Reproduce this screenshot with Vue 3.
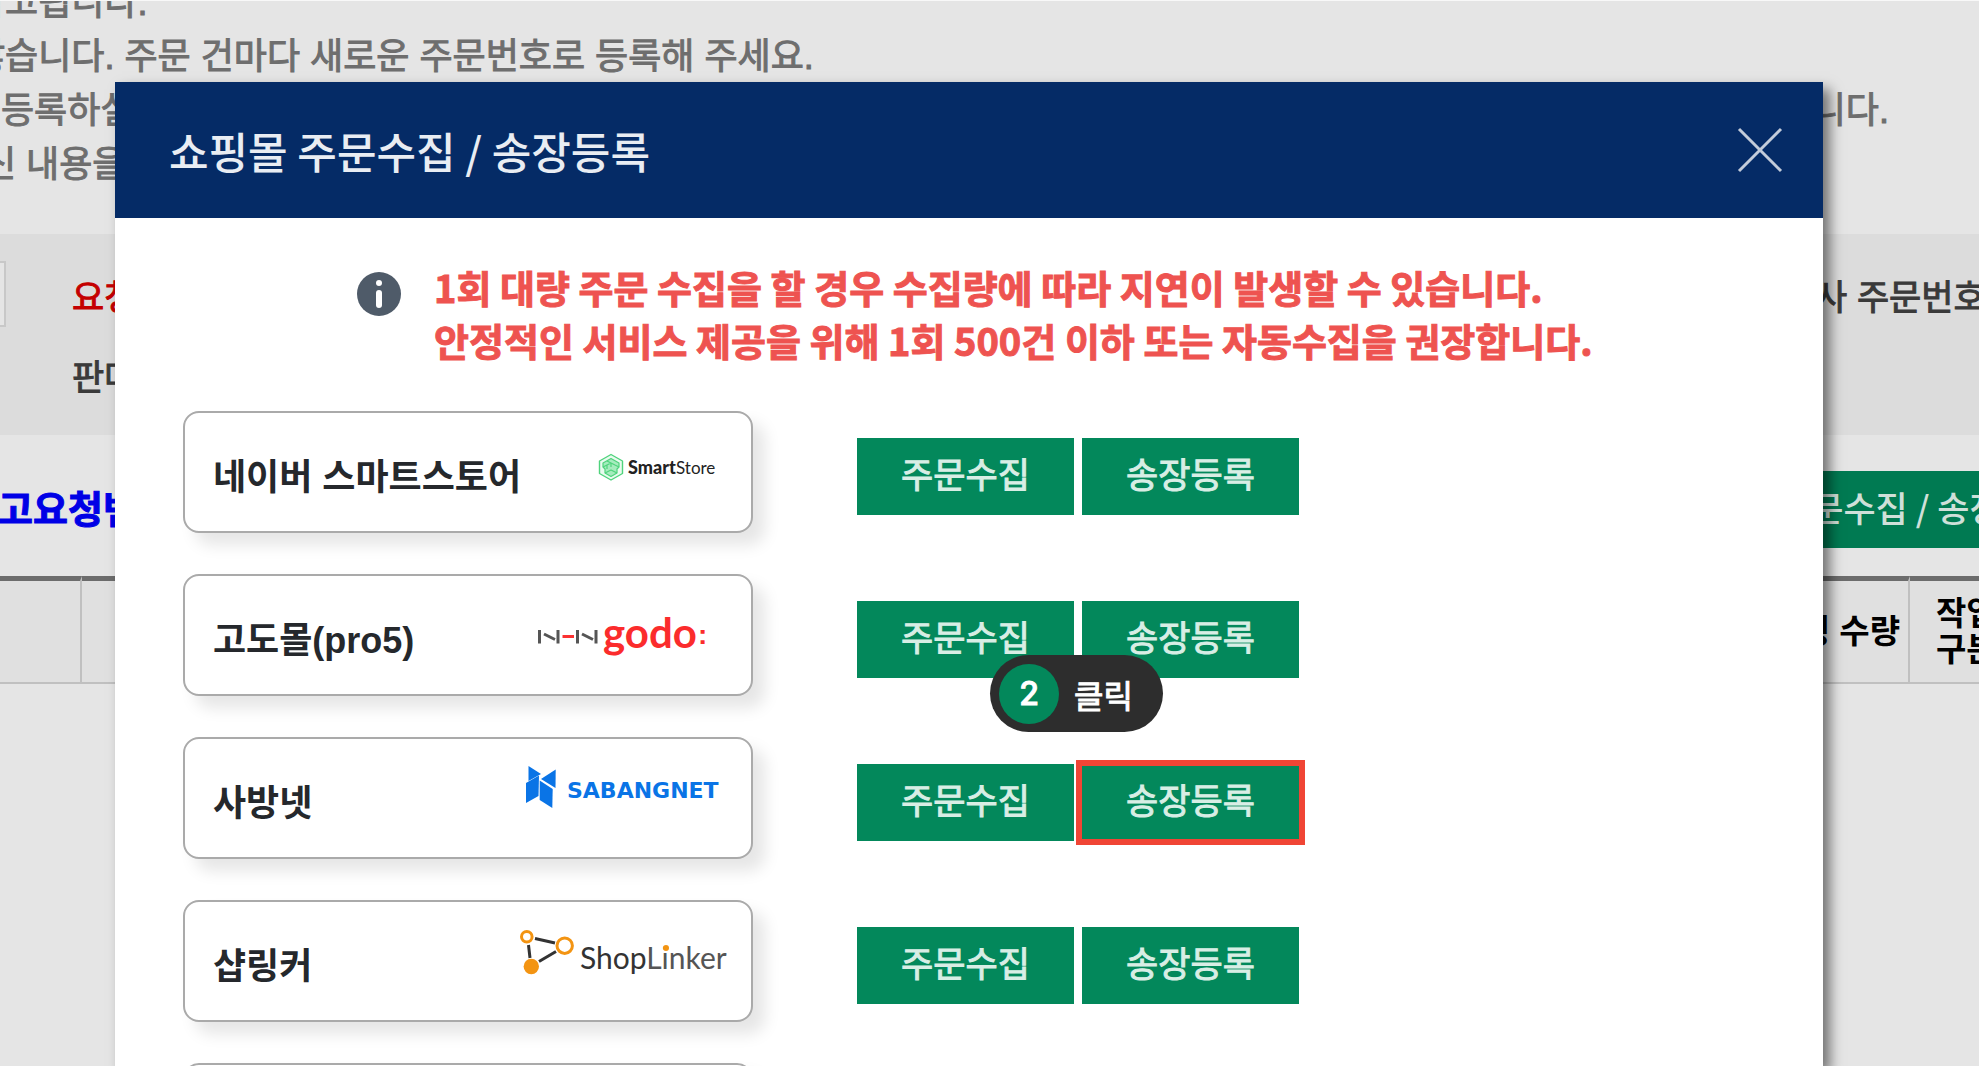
<template>
  <div class="page">
    <!-- Order page behind the dialog -->
    <div class="guide">
      <p v-for="line in guideLines" :key="line.text" :style="{ marginLeft: line.shift + 'px' }">
        <span>{{ line.text }}</span>
        <span v-if="line.end">{{ line.end }}</span>
      </p>
    </div>

    <div class="filters">
      <div class="filter-row">
        <input id="request-no" class="filter-input" type="text">
        <label class="required" for="request-no">요청</label>
        <span class="filter-right">사 주문번호</span>
      </div>
      <div class="filter-row">
        <span class="filter-space"></span>
        <span>판매</span>
      </div>
    </div>

    <div class="toolbar">
      <strong class="toolbar-title">고요청번</strong>
      <button class="toolbar-button" type="button">주문수집 / 송장등록</button>
    </div>

    <table class="orders">
      <thead>
        <tr>
          <th class="col-check"></th>
          <th class="col-count">정 수량</th>
          <th class="col-type">작업<br>구분</th>
        </tr>
      </thead>
    </table>

    <!-- Dialog -->
    <section v-if="open" class="modal" role="dialog" aria-labelledby="modal-title">
      <header class="modal-header">
        <h1 id="modal-title">쇼핑몰 주문수집 / 송장등록</h1>
        <button class="close" type="button" aria-label="닫기" @click="open = false">
          <svg width="46" height="46" viewBox="0 0 46 46">
            <path d="M2 2 L44 44 M44 2 L2 44" />
          </svg>
        </button>
      </header>

      <div class="warning">
        <svg class="info" width="44" height="44" viewBox="0 0 44 44">
          <circle cx="22" cy="22" r="22" fill="#4f5b69" />
          <circle cx="22" cy="11" r="3" fill="#fff" />
          <rect x="19" y="18" width="6" height="18" rx="3" fill="#fff" />
        </svg>
        <p>
          1회 대량 주문 수집을 할 경우 수집량에 따라 지연이 발생할 수 있습니다.<br>
          안정적인 서비스 제공을 위해 1회 500건 이하 또는 자동수집을 권장합니다.
        </p>
      </div>

      <ul class="malls">
        <li v-for="mall in malls" :key="mall.id" class="mall">
          <div class="card">
            <span class="mall-name">{{ mall.name }}</span>

            <svg v-if="mall.id === 'smartstore'" class="logo" viewBox="0 0 231 118">
              <g fill="none" stroke="#4fd37c" stroke-linejoin="round">
                <path d="M90 41.500 L101.500 48 V60.500 L90 67 L78.500 60.500 V48 Z" fill="#e9fbef" stroke-width="1.400" />
                <path d="M82 50 L90 45.500 L98 50 V54 L96 56 V60 L90 63.500 L84 60 V56 L82 54 Z" fill="#a5ecbd" stroke-width="1.200" />
                <path d="M82 54 L90 50 L98 54 M86 48 L94 52 M90 54 V50 M86 56 V52 M84 60 L90 57 L96 60" stroke-width="1.200" />
              </g>
              <text class="smart" x="107" y="61">Smart</text>
              <text class="store" x="155" y="61">Store</text>
            </svg>

            <svg v-else-if="mall.id === 'godo'" class="logo" viewBox="0 0 231 118">
              <g fill="none" stroke="#555" stroke-width="3">
                <path d="M19.500 54 V67.500 M38 54 V67.500 M57.500 54 V67.500 M76 54 V67.500" />
                <path d="M24 58 L35 63.500 M62 58 L73 63.500" />
                <path d="M42.500 60.500 H54" stroke="#fb3232" />
              </g>
              <text class="godo" x="83" y="72">godo</text>
              <text class="colon" x="178" y="68">:</text>
            </svg>

            <svg v-else-if="mall.id === 'sabangnet'" class="logo" viewBox="0 0 231 118">
              <g fill="#0a74e6">
                <path d="M8.500 27 L21 35 L8.500 42 Z" />
                <path d="M6 44 L19 36.500 L18.500 57 L6 64 Z" />
                <path d="M35.700 30.500 L35.500 49 L21 40 Z" />
                <path d="M19.700 41.500 L32.700 50 L32.300 69 L19.700 61 Z" />
              </g>
              <text class="sabang" x="47" y="59">SABANGNET</text>
            </svg>

            <svg v-else-if="mall.id === 'shoplinker'" class="logo" viewBox="0 0 231 118">
              <g fill="none" stroke="#333" stroke-width="3">
                <path d="M15 36.500 L35 41 M8.500 43 L10 56 M19 59.500 L36 49.500" />
                <circle cx="6.800" cy="34.700" r="5.300" stroke="#f39412" />
                <circle cx="44.700" cy="43.700" r="7.700" stroke="#f39412" />
              </g>
              <circle cx="11.300" cy="64.500" r="7.700" fill="#f39412" />
              <text class="linker" x="60" y="67">Shop<tspan class="linker-end">Linker</tspan></text>
              <circle cx="146" cy="46" r="3" fill="#f39412" />
            </svg>
          </div>

          <div class="actions">
            <button class="action" type="button">주문수집</button>
            <div class="action-wrap">
              <button class="action" :class="{ target: mall.id === 'sabangnet' }" type="button">송장등록</button>
              <div v-if="mall.id === 'sabangnet'" class="step">
                <span class="step-number">2</span>
                <span>클릭</span>
              </div>
            </div>
          </div>
        </li>
      </ul>
    </section>
  </div>
</template>

<script setup>
import { ref } from 'vue';

const open = ref(true);

// shift: how far the line is scrolled out on the left
const guideLines = [
  { text: '참고됩니다.', shift: -28 },
  { text: '않습니다. 주문 건마다 새로운 주문번호로 등록해 주세요.', shift: -28 },
  { text: '등록하실', end: '니다.', shift: 1 },
  { text: '신 내용을', shift: -17 },
];

const malls = [
  { id: 'smartstore', name: '네이버 스마트스토어' },
  { id: 'godo', name: '고도몰(pro5)' },
  { id: 'sabangnet', name: '사방넷' },
  { id: 'shoplinker', name: '샵링커' },
  { id: 'next', name: '' },
];
</script>

<style>
body {
  margin: 0;
}
</style>

<style scoped>
* {
  box-sizing: border-box;
}

.page {
  position: relative;
  height: 100vh;
  overflow: hidden;
  background: #e5e5e5;
  font-family: "Liberation Sans", "Noto Sans CJK KR", sans-serif;
  font-size: 36px;
}

/* Medium weight for the Korean text */
.guide,
.filters,
.toolbar-title,
.warning p,
.action,
.step {
  -webkit-text-stroke: 1px currentColor;
}

/* Guide text */
.guide {
  height: 234px;
  overflow: hidden;
  display: flex;
  flex-direction: column;
  justify-content: flex-end;
  padding-bottom: 42px;
  border-top: 1px solid #f8f8f8;
  color: #6e6e6e;
  line-height: 54px;
}

.guide p {
  display: flex;
  flex: none;
  justify-content: space-between;
  margin: 0;
  padding-right: 90px;
  white-space: nowrap;
}

/* Filters */
.filters {
  display: flex;
  flex-direction: column;
  gap: 14px;
  padding: 28px 0 27px;
  background: #dcdcdc;
  color: #3a3a3a;
  font-size: 35px;
}

.filter-row {
  display: flex;
  align-items: center;
  height: 66px;
  padding-bottom: 2px;
  white-space: nowrap;
}

.filter-input {
  width: 60px;
  height: 66px;
  margin-left: -54px;
  margin-right: 66px;
  border: 2px solid #c8c8c8;
  background: #e5e5e5;
}

.filter-space {
  width: 72px;
}

.required {
  color: #c40000;
}

.filter-right {
  width: 164px;
  margin-left: auto;
}

/* Toolbar */
.toolbar {
  display: flex;
  align-items: center;
  justify-content: space-between;
  height: 141px;
  padding-top: 8px;
  white-space: nowrap;
}

.toolbar-title {
  margin-left: -2px;
  padding-bottom: 6px;
  color: #0000e6;
  font-size: 38px;
  font-weight: 700;
}

.toolbar-button {
  flex: none;
  width: 244px;
  height: 77px;
  padding: 0 0 6px 44px;
  border: none;
  background: #007a52;
  color: #cfe0d9;
  font-family: "Noto Sans CJK KR", sans-serif;
  font-size: 35px;
  font-weight: 500;
  text-align: left;
  white-space: nowrap;
  overflow: hidden;
}

/* Table header */
.orders {
  width: 100%;
  table-layout: fixed;
  border-collapse: separate;
  border-spacing: 0;
  color: #000;
  font-size: 33px;
  line-height: 36px;
}

.orders th {
  height: 108px;
  padding: 0;
  border-top: 5px solid #6c6c6c;
  border-bottom: 2px solid #c0c0c0;
  border-right: 2px solid #c0c0c0;
  background: #e0e0e0;
  white-space: nowrap;
}

.orders .col-check {
  width: 82px;
}

.orders .col-count {
  padding-right: 8px;
  text-align: right;
}

.orders .col-type {
  width: 69px;
  padding-left: 26px;
  border-right: none;
  text-align: left;
}

/* Dialog */
.modal {
  position: absolute;
  top: 82px;
  right: 156px;
  bottom: 0;
  left: 115px;
  background: #fff;
  box-shadow: 7px 7px 12px rgba(0, 0, 0, 0.5);
}

.modal-header {
  display: flex;
  align-items: center;
  justify-content: space-between;
  height: 136px;
  padding: 0 40px 0 54px;
  background: #052b66;
}

.modal-header h1 {
  margin: 0;
  color: #e9edf3;
  font-family: "Noto Sans CJK KR", sans-serif;
  font-size: 43px;
  font-weight: 500;
}

.close {
  display: flex;
  padding: 0;
  border: none;
  background: none;
  cursor: pointer;
}

.close path {
  fill: none;
  stroke: #c3ccda;
  stroke-width: 3;
}

.warning {
  display: flex;
  align-items: flex-start;
  gap: 33px;
  padding: 42px 0 0 242px;
}

.info {
  flex: none;
  margin-top: 12px;
}

.warning p {
  margin: 0;
  color: #ee5350;
  font-family: "Noto Sans CJK KR", sans-serif;
  font-size: 38px;
  font-weight: 700;
  line-height: 53px;
  white-space: nowrap;
}

.malls {
  display: flex;
  flex-direction: column;
  gap: 41px;
  height: 699px;
  margin: 45px 0 0;
  padding: 0 0 0 68px;
  overflow: hidden;
  list-style: none;
}

.mall {
  display: flex;
  flex: none;
  gap: 104px;
}

.card {
  display: flex;
  align-items: center;
  justify-content: space-between;
  width: 570px;
  height: 122px;
  padding-left: 28px;
  border: 2px solid #aaa;
  border-radius: 16px;
  background: #fff;
  box-shadow: 12px 12px 16px rgba(0, 0, 0, 0.1);
}

.mall-name {
  padding-top: 4px;
  color: #25282c;
  font-weight: 700;
  white-space: nowrap;
}

.logo {
  flex: none;
  width: 231px;
  height: 118px;
}

.smart,
.store {
  fill: #222;
  font-family: Lato, sans-serif;
  font-size: 18px;
  font-weight: 900;
}

.store {
  font-size: 17px;
  font-weight: 400;
}

.godo {
  fill: #fb2c2c;
  font-family: Lato, sans-serif;
  font-size: 42px;
  font-weight: 700;
}

.colon {
  fill: #fb2c2c;
  font-size: 28px;
  font-weight: 700;
}

.sabang {
  fill: #0a74e6;
  font-family: "DejaVu Sans", sans-serif;
  font-size: 22px;
  font-weight: 700;
}

.linker {
  fill: #333;
  font-family: Lato, sans-serif;
  font-size: 30px;
}

.linker-end {
  fill: #555;
}

.actions {
  display: flex;
  align-items: flex-start;
  gap: 8px;
  padding-top: 27px;
}

.action-wrap {
  position: relative;
}

.action {
  display: block;
  position: relative;
  width: 217px;
  height: 77px;
  padding: 0 0 8px;
  border: none;
  background: #03885b;
  color: #d8eee5;
  font-family: "Noto Sans CJK KR", sans-serif;
  font-size: 35px;
  cursor: pointer;
}

/* Red frame over the button to click */
.target::after {
  content: "";
  position: absolute;
  inset: -4px -6px;
  border: 6px solid #f04535;
}

.step {
  position: absolute;
  bottom: 109px;
  left: -92px;
  display: flex;
  align-items: center;
  gap: 15px;
  width: 173px;
  height: 77px;
  padding-left: 9px;
  border-radius: 39px;
  background: #2d2d2d;
  color: #fff;
  font-family: "Noto Sans CJK KR", sans-serif;
  font-size: 32px;
  line-height: 40px;
}

.step-number {
  display: flex;
  align-items: center;
  justify-content: center;
  width: 60px;
  height: 60px;
  border-radius: 50%;
  background: #03885b;
  font-family: Inter, sans-serif;
  font-weight: 500;
}
</style>
